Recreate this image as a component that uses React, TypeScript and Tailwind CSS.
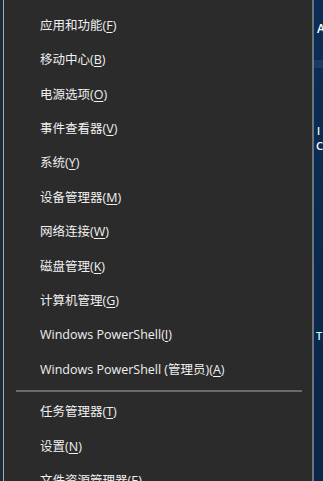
import React from 'react';

type Item = { label: string; key: string };

const top: Item[] = [
  { label: '应用和功能', key: 'F' },
  { label: '移动中心', key: 'B' },
  { label: '电源选项', key: 'O' },
  { label: '事件查看器', key: 'V' },
  { label: '系统', key: 'Y' },
  { label: '设备管理器', key: 'M' },
  { label: '网络连接', key: 'W' },
  { label: '磁盘管理', key: 'K' },
  { label: '计算机管理', key: 'G' },
  { label: 'Windows PowerShell', key: 'I' },
  { label: 'Windows PowerShell (管理员)', key: 'A' },
];

const bottom: Item[] = [
  { label: '任务管理器', key: 'T' },
  { label: '设置', key: 'N' },
  { label: '文件资源管理器', key: 'E' },
];

const Row: React.FC<{ item: Item }> = ({ item }) => (
  <div className="h-[34.4px] shrink-0 flex items-center pl-[36px] text-[12.5px] text-[#f0f0f0] whitespace-nowrap">
    <span>{item.label}</span>
    <span>
      (<span className="underline underline-offset-2">{item.key}</span>)
    </span>
  </div>
);

export default function App() {
  return (
    <div
      className="w-[323px] h-[481px] overflow-hidden flex bg-[#0b2a4d]"
      style={{ fontFamily: '"Open Sans", "Noto Sans CJK SC", sans-serif' }}
    >
      <div className="w-[3px] shrink-0 bg-[#1e2a36]" />
      <div className="w-[1px] shrink-0 bg-[#a3abb3]" />
      <div className="w-[308px] bg-[#2b2b2b] pt-[9px] flex flex-col shrink-0 overflow-hidden">
        {top.map((it) => (
          <Row key={it.key} item={it} />
        ))}
        <div className="h-[8px] shrink-0 flex items-center pl-[12px] pr-[10px]">
          <div className="h-[2px] w-full bg-[#6a6a6a]" />
        </div>
        {bottom.map((it) => (
          <Row key={it.key} item={it} />
        ))}
      </div>
      <div className="w-[2px] bg-[#6c737b] shrink-0" />
      <div className="flex-1 relative bg-gradient-to-b from-[#0b2d55] to-[#0a2648] text-white text-[12px] font-semibold overflow-hidden">
        <div className="absolute left-[3px] top-[20px]">A</div>
        <div className="absolute left-0 right-0 top-[60px] h-[8px] bg-[#1a4a7a]/60" />
        <div className="absolute left-[3px] top-[124px] text-[10px]">I</div>
        <div className="absolute left-[2px] top-[138px] text-[11px]">C</div>
        <div className="absolute left-[2px] top-[328px] text-[11px] text-[#cfe]">T</div>
      </div>
    </div>
  );
}
